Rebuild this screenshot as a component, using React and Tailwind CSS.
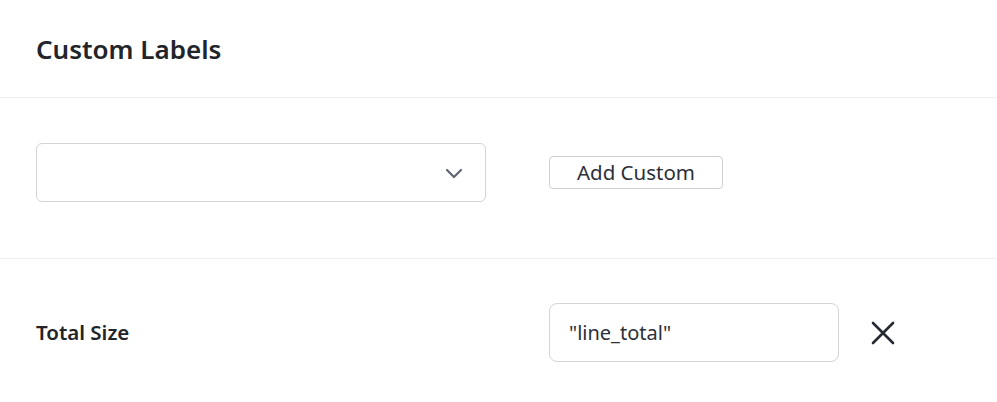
import React from 'react';

const font = { fontFamily: '"Segoe UI", "Noto Sans", "Open Sans", sans-serif' };

const Chevron = () => (
    <svg width="18" height="12" viewBox="0 0 18 12" fill="none" className="text-[#5f6670]">
        <path d="M2 3l7 7 7-7" stroke="currentColor" strokeWidth="2.2" strokeLinecap="round" strokeLinejoin="round" />
    </svg>
);

const Cross = () => (
    <svg width="26" height="26" viewBox="0 0 26 26" fill="none" className="text-[#262b33]">
        <path d="M3 3l20 20M23 3L3 23" stroke="currentColor" strokeWidth="2.6" strokeLinecap="round" />
    </svg>
);

const App = () => {
    return (
        <div className="min-h-screen w-full bg-white text-[#212529]" style={font}>
            {/* header */}
            <div className="h-[98px] px-9 flex items-center border-b border-[#f0f0f0]">
                <h1 className="text-[26px] font-semibold leading-none">Custom Labels</h1>
            </div>

            {/* picker row */}
            <div className="px-9 pt-[45px] pb-[56px] grid grid-cols-[513px_1fr] items-center border-b border-[#f0f0f0]">
                <div className="w-[450px] h-[59px] rounded-md border border-[#d4d4d4] flex items-center justify-end pr-[22px]">
                    <Chevron />
                </div>
                <div>
                    <button className="h-[33px] w-[174px] rounded-[4px] border border-[#cfcfcf] bg-white text-[20.5px] leading-none text-[#2b3038] flex items-center justify-center">
                        Add Custom
                    </button>
                </div>
            </div>

            {/* custom label row */}
            <div className="px-9 pt-[44px] grid grid-cols-[513px_1fr] items-center">
                <div className="text-[20.5px] font-semibold">Total Size</div>
                <div className="flex items-center">
                    <div className="w-[290px] h-[59px] rounded-lg border border-[#d4d4d4] flex items-center px-[19px] text-[20px] text-[#2b3038]">
                        "line_total"
                    </div>
                    <button className="ml-[31px] p-0 flex items-center">
                        <Cross />
                    </button>
                </div>
            </div>
        </div>
    );
};

export default App;
